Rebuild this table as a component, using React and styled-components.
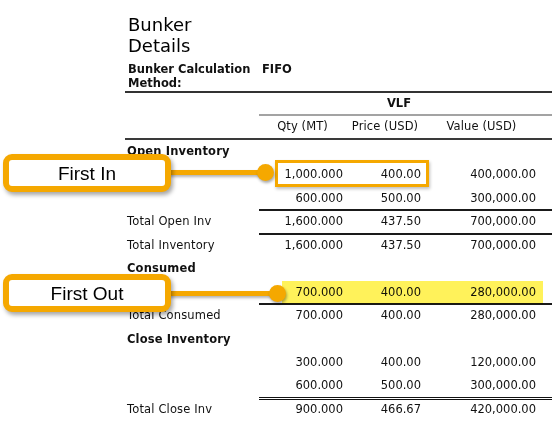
import React from "react";
import styled, { createGlobalStyle } from "styled-components";

const ORANGE = "#f5a800";

const Global = createGlobalStyle`
  html, body { margin: 0; padding: 0; background: #fff; }
`;

const Page = styled.div`
  position: relative;
  width: 552px;
  height: 431px;
  overflow: hidden;
  background: #fff;
  font-family: "DejaVu Sans", Verdana, sans-serif;
  color: #111;
`;

const Report = styled.div`
  margin-left: 125px;
  padding-top: 14px;
  width: 427px;
`;

const Title = styled.h1`
  margin: 0;
  padding-left: 3px;
  width: 110px;
  font-size: 18px;
  line-height: 21px;
  font-weight: normal;
  color: #000;
`;

const MethodRow = styled.div`
  display: grid;
  grid-template-columns: 134px 1fr;
  margin-top: 6px;
  padding-bottom: 1px;
  border-bottom: 2px solid #333;
  font-size: 11.5px;
  line-height: 14px;
  font-weight: bold;
`;

const MethodCell = styled.div`
  padding-left: 3px;
`;

const Grid = styled.div`
  display: grid;
  grid-template-columns: 134px 87px 78px 115px 1fr;
  font-size: 11.5px;
`;

const GroupHead = styled.div`
  grid-column: ${(p) => p.$span || "auto"};
  height: 21px;
  line-height: 21px;
  text-align: center;
  font-weight: bold;
  border-bottom: ${(p) => (p.$ruled ? "2px solid #a3a3a3" : "2px solid transparent")};
`;

const ColHead = styled.div`
  height: 18px;
  line-height: 18px;
  padding: 1px 0 3px;
  text-align: center;
  letter-spacing: 0.1px;
  border-bottom: 2px solid #3a3a3a;
`;

const Body = styled.div`
  display: grid;
  grid-template-columns: 134px 87px 78px 115px 1fr;
  grid-auto-rows: 23.45px;
  font-size: 11.5px;
  line-height: 23.45px;
`;

const rules = {
  single: "0 -1px 0 #1a1a1a, inset 0 1px 0 #1a1a1a",
  double: "0 -1px 0 #111, inset 0 1px 0 #fff, inset 0 2px 0 #111",
};

const Cell = styled.div`
  padding: ${(p) => (p.$num ? "0 3px 0 0" : "0 0 0 2px")};
  text-align: ${(p) => (p.$num ? "right" : "left")};
  font-weight: ${(p) => (p.$bold ? "bold" : "normal")};
  letter-spacing: ${(p) => (p.$num ? "0" : "0.15px")};
  white-space: nowrap;
  box-shadow: ${(p) => (p.$rule ? rules[p.$rule] : "none")};
`;

const CalloutBox = styled.div`
  position: absolute;
  left: 3px;
  top: ${(p) => p.$top}px;
  width: 168px;
  height: 38px;
  box-sizing: border-box;
  border: 6px solid ${ORANGE};
  border-radius: 9px;
  background: #fff;
  box-shadow: 2px 3px 4px rgba(0, 0, 0, 0.35);
  display: flex;
  align-items: center;
  justify-content: center;
  padding-top: 2px;
  font-family: "Liberation Sans", Arial, sans-serif;
  font-size: 19px;
  color: #000;
  z-index: 3;
`;

const Connector = styled.div`
  position: absolute;
  left: 168px;
  top: ${(p) => p.$y - 2.5}px;
  width: ${(p) => p.$x - 168}px;
  height: 5px;
  background: ${ORANGE};
  box-shadow: 1px 2px 3px rgba(0, 0, 0, 0.3);
  z-index: 2;
`;

const Dot = styled.div`
  position: absolute;
  left: ${(p) => p.$x - 8.5}px;
  top: ${(p) => p.$y - 8.5}px;
  width: 17px;
  height: 17px;
  border-radius: 50%;
  background: ${ORANGE};
  box-shadow: 1px 2px 3px rgba(0, 0, 0, 0.35);
  z-index: 2;
`;

const Frame = styled.div`
  position: absolute;
  left: 275px;
  top: 160px;
  width: 154px;
  height: 27px;
  box-sizing: border-box;
  border: 3px solid ${ORANGE};
  box-shadow: 1px 2px 3px rgba(0, 0, 0, 0.25);
  z-index: 2;
`;

const Highlight = styled.div`
  position: absolute;
  left: 282px;
  top: 281px;
  width: 261px;
  height: 23px;
  background: #fff25a;
  mix-blend-mode: multiply;
  z-index: 1;
`;

const rows = [
  { label: "Open Inventory", bold: true },
  { vals: ["1,000.000", "400.00", "400,000.00"] },
  { vals: ["600.000", "500.00", "300,000.00"] },
  { label: "Total Open Inv", vals: ["1,600.000", "437.50", "700,000.00"], rule: "single" },
  { label: "Total Inventory", vals: ["1,600.000", "437.50", "700,000.00"], rule: "single" },
  { label: "Consumed", bold: true },
  { vals: ["700.000", "400.00", "280,000.00"] },
  { label: "Total Consumed", vals: ["700.000", "400.00", "280,000.00"], rule: "single" },
  { label: "Close Inventory", bold: true },
  { vals: ["300.000", "400.00", "120,000.00"] },
  { vals: ["600.000", "500.00", "300,000.00"] },
  { label: "Total Close Inv", vals: ["900.000", "466.67", "420,000.00"], rule: "double" },
];

function Callout({ top, text, x, y }) {
  return (
    <>
      <CalloutBox $top={top}>{text}</CalloutBox>
      <Connector $x={x} $y={y} />
      <Dot $x={x} $y={y} />
    </>
  );
}

export default function App() {
  return (
    <Page>
      <Global />
      <Report>
        <Title>Bunker Details</Title>
        <MethodRow>
          <MethodCell>
            Bunker Calculation
            <br />
            Method:
          </MethodCell>
          <MethodCell>FIFO</MethodCell>
        </MethodRow>
        <Grid>
          <GroupHead />
          <GroupHead $span="span 3" $ruled>
            VLF
          </GroupHead>
          <GroupHead $ruled />
          <ColHead />
          <ColHead>Qty (MT)</ColHead>
          <ColHead>Price (USD)</ColHead>
          <ColHead>Value (USD)</ColHead>
          <ColHead />
        </Grid>
        <Body>
          {rows.map((r, i) => (
            <React.Fragment key={i}>
              <Cell $bold={r.bold}>{r.label || ""}</Cell>
              {[0, 1, 2].map((k) => (
                <Cell key={k} $num $rule={r.rule}>
                  {r.vals ? r.vals[k] : ""}
                </Cell>
              ))}
              <Cell $num $rule={r.rule} />
            </React.Fragment>
          ))}
        </Body>
      </Report>
      <Frame />
      <Highlight />
      <Callout top={154} text="First In" x={265} y={172.5} />
      <Callout top={274} text="First Out" x={277} y={293} />
    </Page>
  );
}
